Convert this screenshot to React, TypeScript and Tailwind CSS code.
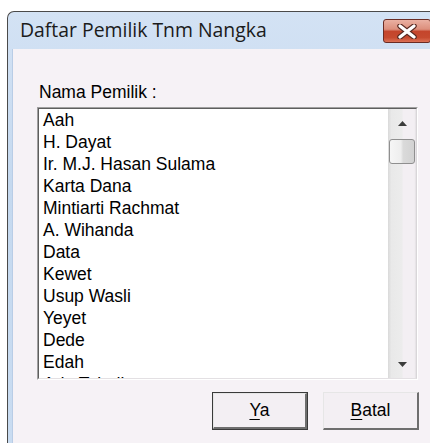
import React from "react";

const owners = [
  "Aah",
  "H. Dayat",
  "Ir. M.J. Hasan Sulama",
  "Karta Dana",
  "Mintiarti Rachmat",
  "A. Wihanda",
  "Data",
  "Kewet",
  "Usup Wasli",
  "Yeyet",
  "Dede",
  "Edah",
  "Ade Tajudin",
];

function CloseGlyph() {
  return (
    <svg width="22" height="15" viewBox="0 0 22 15">
      <path d="M4 2 L18 13 M18 2 L4 13" stroke="#5a2a22" strokeWidth="5.5" strokeLinecap="round" />
      <path d="M4 2 L18 13 M18 2 L4 13" stroke="#ffffff" strokeWidth="3.2" strokeLinecap="round" />
    </svg>
  );
}

function Arrow({ up }: { up?: boolean }) {
  return (
    <svg width="9" height="5" viewBox="0 0 9 5">
      {up ? <path d="M0 5 L4.5 0 L9 5 Z" fill="#3c3c3c" /> : <path d="M0 0 L4.5 5 L9 0 Z" fill="#3c3c3c" />}
    </svg>
  );
}

function DialogButton({ label, isDefault }: { label: string; isDefault?: boolean }) {
  const first = label.slice(0, 1);
  const rest = label.slice(1);
  const face = (
    <div className="h-full w-full border-t border-l border-r-2 border-b-2 border-t-[#e6e6e6] border-l-[#e6e6e6] border-r-[#6e6e6e] border-b-[#6e6e6e] bg-[#f3eff3] flex items-center justify-center">
      <span className="text-[17.5px] text-black leading-none">
        <span className="underline underline-offset-[3px]">{first}</span>
        {rest}
      </span>
    </div>
  );
  return (
    <div className={`w-[96px] h-[38px] ${isDefault ? "border border-[#3a3a3a]" : ""}`}>{face}</div>
  );
}

export default function App() {
  return (
    <div
      className="w-[430px] h-[443px] bg-white overflow-hidden pl-[7px] pt-[11px]"
      style={{ fontFamily: '"Liberation Sans", Arial, sans-serif' }}
    >
      <div className="w-[440px] h-[432px] flex flex-col rounded-tl-[7px] border-l border-t border-[#4a4a4a] bg-[linear-gradient(to_bottom,#d3e2f4_0%,#c5d9ef_40%,#c9dcf1_100%)] overflow-hidden">
        {/* caption */}
        <div className="h-[37px] shrink-0 relative flex items-center pl-[12px]">
          <span
            className="text-[19.4px] text-[#1b1b1b] pb-[2px]"
            style={{ fontFamily: '"Open Sans", "Noto Sans", sans-serif' }}
          >
            Daftar Pemilik Tnm Nangka
          </span>
          <div className="absolute left-[375px] top-[7px] w-[48px] h-[24px] rounded-[3px] border border-[#6a2c24] bg-[linear-gradient(to_bottom,#eab0a2_0%,#dc8f7c_42%,#c4452c_52%,#c64a2f_80%,#dc7257_100%)] flex items-center justify-center">
            <CloseGlyph />
          </div>
        </div>

        {/* client area */}
        <div className="flex-1 ml-[4px] border-l border-[#b9cde6] bg-[#f6f2f6] pl-[24px] pt-[32px]">
          <div className="h-[22px] leading-[22px] pl-[2px] text-[17.5px] text-black">Nama Pemilik :</div>

          <div className="mt-[4px] w-[381px] h-[273px] border-t border-l border-t-[#a0a0a0] border-l-[#a0a0a0] border-r border-b border-r-white border-b-white">
            <div className="h-full w-full border-t border-l border-t-[#5e5e5e] border-l-[#5e5e5e] border-r border-b border-r-[#d9d6d9] border-b-[#e3e0e3] flex">
              <div className="flex-1 bg-white overflow-hidden">
                {owners.map((name) => (
                  <div key={name} className="h-[22px] leading-[22px] pl-[4px] text-[17.5px] text-black whitespace-nowrap">
                    {name}
                  </div>
                ))}
              </div>
              <div className="w-[28px] flex flex-col bg-[linear-gradient(to_right,#d9d9d9_0%,#e9e9e9_12%,#ececec_50%,#f3eff3_54%,#f3eff3_94%,#e2dfe2_100%)]">
                <div className="h-[28px] flex items-center justify-center">
                  <Arrow up />
                </div>
                <div className="mt-[2px] mx-[1px] h-[25px] rounded-[3px] border border-[#8f8f8f] bg-[linear-gradient(to_right,#f6f6f6_0%,#eeeeee_45%,#dadada_55%,#d2d2d2_100%)]" />
                <div className="flex-1" />
                <div className="h-[28px] flex items-center justify-center">
                  <Arrow />
                </div>
              </div>
            </div>
          </div>

          <div className="mt-[12px] w-[382px] flex justify-end gap-[15px]">
            <DialogButton label="Ya" isDefault />
            <DialogButton label="Batal" />
          </div>
        </div>
      </div>
    </div>
  );
}
